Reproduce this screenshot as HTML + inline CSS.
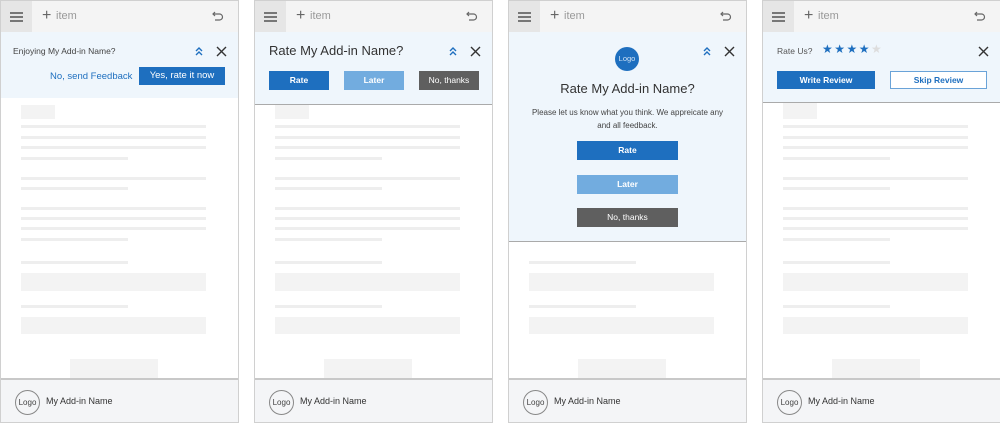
<!DOCTYPE html>
<html><head><style>
*{box-sizing:border-box;margin:0;padding:0}
body{width:1000px;height:423px;background:#fff;font-family:"Segoe UI","Liberation Sans",sans-serif;position:relative;overflow:hidden;color:#333}
.p{position:absolute;top:0;width:239px;height:423px;border:1px solid #d0d0d0;background:#fff;overflow:hidden}
.a{position:absolute}
.hdr{left:0;top:0;width:100%;height:31px;background:#f4f4f4}
.hb{left:0;top:0;width:31px;height:31px;background:#e6e6e6}
.hb i{position:absolute;left:9px;width:13px;height:1.5px;background:#777}
.ln{position:absolute;left:20px;height:3px;background:#eeeeee}
.f{width:185px}.s{width:107px}
.blk{position:absolute;background:#f3f3f3}
.ft{left:0;top:377px;width:100%;height:46px;background:#f4f5f7;border-top:2px solid #c8c8c8}
.lg{position:absolute;left:14px;top:10px;width:25px;height:25px;border:1px solid #888;border-radius:50%;font-size:8px;text-align:center;line-height:23px;color:#444}
.fn{position:absolute;left:45px;top:16px;font-size:9px;color:#333}
.bn{position:absolute;left:0;top:31px;width:100%;background:#eff6fc;border-bottom:1px solid #aaa}
.btn{position:absolute;font-size:8.5px;color:#fff;text-align:center;font-weight:bold}
.x{position:absolute;width:11px;height:11px}
.ch{position:absolute;width:8px;height:9px}
</style></head><body>
<svg width="0" height="0" style="position:absolute"><defs>
<symbol id="undo" viewBox="0 0 12 12"><path d="M3 2 L1 4 L3 6 M1 4 H7.5 A3 3 0 0 1 7.5 10 H3" fill="none" stroke="#666" stroke-width="1.2"/></symbol>
<symbol id="xx" viewBox="0 0 11 11"><path d="M1 1 L10 10 M10 1 L1 10" stroke="#333" stroke-width="1.4"/></symbol>
<symbol id="cv" viewBox="0 0 8 9"><path d="M1 4 L4 1 L7 4 M1 8 L4 5 L7 8" fill="none" stroke="#1e6fbf" stroke-width="1.4"/></symbol>
</defs></svg>

<div class="p" style="left:0">
 <div class="a hdr"></div><div class="a hb"><i style="top:11px"></i><i style="top:15px"></i><i style="top:19px"></i></div>
 <div class="a" style="left:41px;top:6px;font-size:16px;color:#666">+</div><div class="a" style="left:55px;top:9px;font-size:11px;color:#999">item</div>
 <svg class="a" style="left:211px;top:9px" width="12" height="12"><use href="#undo"/></svg>
 <div class="blk" style="left:20px;top:104px;width:34px;height:14px"></div>
 <div class="ln f" style="top:124px"></div><div class="ln f" style="top:135px"></div><div class="ln f" style="top:145px"></div><div class="ln s" style="top:156px"></div>
 <div class="ln f" style="top:176px"></div><div class="ln s" style="top:186px"></div>
 <div class="ln f" style="top:206px"></div><div class="ln f" style="top:216px"></div><div class="ln f" style="top:226px"></div><div class="ln s" style="top:237px"></div>
 <div class="ln s" style="top:260px"></div><div class="blk" style="left:20px;top:272px;width:185px;height:18px"></div>
 <div class="ln s" style="top:304px"></div><div class="blk" style="left:20px;top:316px;width:185px;height:17px"></div>
 <div class="blk" style="left:69px;top:358px;width:88px;height:20px"></div>
 <div class="a ft"><div class="lg">Logo</div><div class="fn">My Add-in Name</div></div>
 <div class="bn" style="height:66px;border-bottom:none">
  <div class="a" style="left:12px;top:14px;font-size:8.5px;color:#444">Enjoying My Add-in Name?</div>
  <svg class="ch" style="left:194px;top:15px"><use href="#cv"/></svg>
  <svg class="x" style="left:215px;top:14px"><use href="#xx"/></svg>
  <div class="a" style="left:49px;top:39px;font-size:9.5px;color:#1e6fbf">No, send Feedback</div>
  <div class="btn" style="left:138px;top:35px;width:86px;height:18px;background:#1e6fbf;font-weight:normal;font-size:9.5px;line-height:18px">Yes, rate it now</div>
 </div>
</div>

<div class="p" style="left:254px">
 <div class="a hdr"></div><div class="a hb"><i style="top:11px"></i><i style="top:15px"></i><i style="top:19px"></i></div>
 <div class="a" style="left:41px;top:6px;font-size:16px;color:#666">+</div><div class="a" style="left:55px;top:9px;font-size:11px;color:#999">item</div>
 <svg class="a" style="left:211px;top:9px" width="12" height="12"><use href="#undo"/></svg>
 <div class="blk" style="left:20px;top:104px;width:34px;height:14px"></div>
 <div class="ln f" style="top:124px"></div><div class="ln f" style="top:135px"></div><div class="ln f" style="top:145px"></div><div class="ln s" style="top:156px"></div>
 <div class="ln f" style="top:176px"></div><div class="ln s" style="top:186px"></div>
 <div class="ln f" style="top:206px"></div><div class="ln f" style="top:216px"></div><div class="ln f" style="top:226px"></div><div class="ln s" style="top:237px"></div>
 <div class="ln s" style="top:260px"></div><div class="blk" style="left:20px;top:272px;width:185px;height:18px"></div>
 <div class="ln s" style="top:304px"></div><div class="blk" style="left:20px;top:316px;width:185px;height:17px"></div>
 <div class="blk" style="left:69px;top:358px;width:88px;height:20px"></div>
 <div class="a ft"><div class="lg">Logo</div><div class="fn">My Add-in Name</div></div>
 <div class="bn" style="height:73px">
  <div class="a" style="left:14px;top:11px;font-size:13px;color:#333">Rate My Add-in Name?</div>
  <svg class="ch" style="left:194px;top:15px"><use href="#cv"/></svg>
  <svg class="x" style="left:215px;top:14px"><use href="#xx"/></svg>
  <div class="btn" style="left:14px;top:39px;width:60px;height:19px;line-height:19px;background:#1e6fbf">Rate</div>
  <div class="btn" style="left:89px;top:39px;width:60px;height:19px;line-height:19px;background:#72acdf">Later</div>
  <div class="btn" style="left:164px;top:39px;width:60px;height:19px;line-height:19px;background:#5f5f5f;font-weight:normal">No, thanks</div>
 </div>
</div>

<div class="p" style="left:508px">
 <div class="a hdr"></div><div class="a hb"><i style="top:11px"></i><i style="top:15px"></i><i style="top:19px"></i></div>
 <div class="a" style="left:41px;top:6px;font-size:16px;color:#666">+</div><div class="a" style="left:55px;top:9px;font-size:11px;color:#999">item</div>
 <svg class="a" style="left:211px;top:9px" width="12" height="12"><use href="#undo"/></svg>
 <div class="ln s" style="top:260px"></div><div class="blk" style="left:20px;top:272px;width:185px;height:18px"></div>
 <div class="ln s" style="top:304px"></div><div class="blk" style="left:20px;top:316px;width:185px;height:17px"></div>
 <div class="blk" style="left:69px;top:358px;width:88px;height:20px"></div>
 <div class="a ft"><div class="lg">Logo</div><div class="fn">My Add-in Name</div></div>
 <div class="bn" style="height:210px">
  <div class="a" style="left:106px;top:15px;width:24px;height:24px;border-radius:50%;background:#1e6fbf;color:#cfe2f5;font-size:7.5px;text-align:center;line-height:24px">Logo</div>
  <svg class="ch" style="left:194px;top:15px"><use href="#cv"/></svg>
  <svg class="x" style="left:215px;top:14px"><use href="#xx"/></svg>
  <div class="a" style="left:0;top:49px;width:237px;text-align:center;font-size:13px;color:#333">Rate My Add-in Name?</div>
  <div class="a" style="left:20px;top:74px;width:197px;text-align:center;font-size:8px;line-height:13px;color:#444">Please let us know what you think. We appreicate any and all feedback.</div>
  <div class="btn" style="left:68px;top:109px;width:101px;height:19px;line-height:19px;background:#1e6fbf">Rate</div>
  <div class="btn" style="left:68px;top:143px;width:101px;height:19px;line-height:19px;background:#72acdf">Later</div>
  <div class="btn" style="left:68px;top:176px;width:101px;height:19px;line-height:19px;background:#5f5f5f;font-weight:normal">No, thanks</div>
 </div>
</div>

<div class="p" style="left:762px">
 <div class="a hdr"></div><div class="a hb"><i style="top:11px"></i><i style="top:15px"></i><i style="top:19px"></i></div>
 <div class="a" style="left:41px;top:6px;font-size:16px;color:#666">+</div><div class="a" style="left:55px;top:9px;font-size:11px;color:#999">item</div>
 <svg class="a" style="left:211px;top:9px" width="12" height="12"><use href="#undo"/></svg>
 <div class="blk" style="left:20px;top:102px;width:34px;height:16px"></div>
 <div class="ln f" style="top:124px"></div><div class="ln f" style="top:135px"></div><div class="ln f" style="top:145px"></div><div class="ln s" style="top:156px"></div>
 <div class="ln f" style="top:176px"></div><div class="ln s" style="top:186px"></div>
 <div class="ln f" style="top:206px"></div><div class="ln f" style="top:216px"></div><div class="ln f" style="top:226px"></div><div class="ln s" style="top:237px"></div>
 <div class="ln s" style="top:260px"></div><div class="blk" style="left:20px;top:272px;width:185px;height:18px"></div>
 <div class="ln s" style="top:304px"></div><div class="blk" style="left:20px;top:316px;width:185px;height:17px"></div>
 <div class="blk" style="left:69px;top:358px;width:88px;height:20px"></div>
 <div class="a ft"><div class="lg">Logo</div><div class="fn">My Add-in Name</div></div>
 <div class="bn" style="height:71px">
  <div class="a" style="left:14px;top:14px;font-size:8.5px;color:#555">Rate Us?</div>
  <div class="a" style="left:59px;top:10px;font-size:12px;letter-spacing:1.5px;color:#1e6fbf">★★★★<span style="color:#ddd">★</span></div>
  <svg class="x" style="left:215px;top:14px"><use href="#xx"/></svg>
  <div class="btn" style="left:14px;top:39px;width:98px;height:18px;line-height:18px;background:#1e6fbf">Write Review</div>
  <div class="btn" style="left:127px;top:39px;width:97px;height:18px;line-height:16px;background:#fff;border:1px solid #6aa3d8;color:#1e6fbf">Skip Review</div>
 </div>
</div>
</body></html>
